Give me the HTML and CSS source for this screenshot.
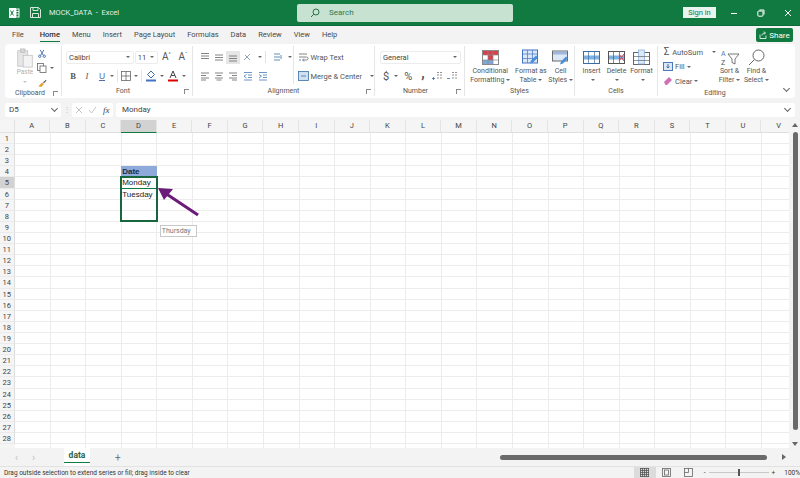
FILE: index.html
```html
<!DOCTYPE html>
<html lang="en">
<head>
  <meta charset="UTF-8" />
  <title>MOCK_DATA - Excel</title>
  <link rel="stylesheet" href="styles.css">
</head>
<body>

<!-- Title bar -->
<div class="titlebar">
  <div class="title-left">
    <svg class="ic-logo" width="12" height="12" viewBox="0 0 12 12"><rect x="1" y="1" width="7" height="10" fill="#fff"/><rect x="5" y="2" width="6" height="8" fill="none" stroke="#fff"/><path d="M5 4.5h6M5 7h6M8 2v8" stroke="#fff" stroke-width=".8"/><path d="M2.5 3.5l3 5M5.5 3.5l-3 5" stroke="#107c41" stroke-width="1"/></svg>
    <svg class="ic-save" width="11" height="11" viewBox="0 0 11 11" fill="none" stroke="#d5e8dc"><path d="M.5.5h8l2 2v8H.5z"/><path d="M3 .5v3h5v-3M2.5 10.5v-4h6v4"/></svg>
    <span class="doc-title">MOCK_DATA &nbsp;-&nbsp; Excel</span>
  </div>
  <div class="search">
    <svg width="10" height="10" viewBox="0 0 10 10" fill="none" stroke="#2c6e49"><circle cx="6" cy="4" r="3"/><path d="M3.8 6.2L1 9"/></svg>
    <span>Search</span>
  </div>
  <div class="title-right">
    <span class="signin">Sign in</span>
    <div class="winbtns">
      <svg width="8" height="8" viewBox="0 0 8 8" stroke="#fff" fill="none"><path d="M1 4.5h6"/></svg>
      <svg width="8" height="8" viewBox="0 0 8 8" stroke="#fff" fill="none"><rect x=".8" y="2" width="5.2" height="5.2" rx="1"/><path d="M2.5 1h4.5v4.5"/></svg>
      <svg width="8" height="8" viewBox="0 0 8 8" stroke="#fff" fill="none"><path d="M1 1l6 6M7 1l-6 6"/></svg>
    </div>
  </div>
</div>

<!-- Tabs -->
<div class="tabs">
  <a>File</a>
  <a class="active">Home</a>
  <a>Menu</a>
  <a>Insert</a>
  <a>Page Layout</a>
  <a>Formulas</a>
  <a>Data</a>
  <a>Review</a>
  <a>View</a>
  <a>Help</a>
  <span class="share">
    <svg width="8" height="8" viewBox="0 0 8 8" fill="none" stroke="#fff" stroke-width=".8"><path d="M1 3.5v4h6v-3M3 4.5c0-2 1.500-2.500 3-2.500M5 .5L6.500 2 5 3.500"/></svg>
    Share
  </span>
</div>

<!-- Ribbon -->
<div class="ribbon">

  <div class="group g-clip">
    <div class="group-body clip-body">
      <div class="paste">
        <svg width="18" height="20" viewBox="0 0 18 22" fill="#e6e6e6" stroke="#bdbdbd" stroke-width=".8"><rect x="1" y="3" width="11" height="17"/><rect x="4" y="1" width="5" height="4" fill="#d5d5d5"/><rect x="7" y="8" width="10" height="13" fill="#f3f3f3"/></svg>
        <span>Paste</span>
        <i class="caret light"></i>
      </div>
      <div class="clip-tools">
        <svg width="10" height="10" viewBox="0 0 10 10" fill="none" stroke="#3c6ea5"><path d="M3 1l3.500 6M7 1L3.500 7"/><circle cx="2.500" cy="8" r="1.300"/><circle cx="7.500" cy="8" r="1.300"/></svg>
        <span class="row-ic">
          <svg width="10" height="10" viewBox="0 0 10 10" fill="#fff" stroke="#666" stroke-width=".8"><rect x=".5" y=".5" width="6" height="7"/><rect x="3" y="3" width="6" height="6.500"/></svg>
          <i class="caret"></i>
        </span>
        <svg width="11" height="11" viewBox="0 0 11 11"><path d="M1 9l4-4 2 2-3 3z" fill="#e0a030"/><path d="M6 5l3-3 1 1-3 3z" fill="#6a6a6a"/></svg>
      </div>
    </div>
    <div class="group-label">Clipboard<i class="launcher"></i></div>
  </div>

  <div class="group g-font">
    <div class="group-body stack">
      <div class="row">
        <span class="select font-name">Calibri<i class="caret"></i></span>
        <span class="select font-size">11<i class="caret"></i></span>
        <span class="grow-a">A<sup>^</sup></span>
        <span class="shrink-a">A<sup>ˇ</sup></span>
      </div>
      <div class="row font-tools">
        <b class="tool">B</b>
        <em class="tool">I</em>
        <u class="tool">U</u>
        <i class="caret"></i>
        <span class="vsep"></span>
        <svg width="10" height="10" viewBox="0 0 10 10" fill="none" stroke="#666" stroke-width=".8"><rect x=".5" y=".5" width="9" height="9"/><path d="M5 .5v9M.5 5h9"/></svg>
        <i class="caret"></i>
        <span class="vsep"></span>
        <svg width="12" height="12" viewBox="0 0 12 12"><path d="M6 1l3.500 3.500L6 8 2.500 4.500z" fill="none" stroke="#3c6ea5"/><rect x="1" y="9.500" width="10" height="2" fill="#4472c4"/></svg>
        <i class="caret"></i>
        <svg class="font-color" width="12" height="12" viewBox="0 0 12 12"><path d="M3 8l3-7 3 7M4.200 5.500h3.600" fill="none" stroke="#444"/><rect x="1" y="9.500" width="10" height="2" fill="#d00"/></svg>
        <i class="caret"></i>
      </div>
    </div>
    <div class="group-label">Font<i class="launcher"></i></div>
  </div>

  <div class="group g-align">
    <div class="group-body align-body">
      <div class="stack align-icons">
        <div class="row">
          <svg class="lines" viewBox="0 0 10 10"><path d="M1 1.500h8M1 4h8M1 6.500h8"/></svg>
          <svg class="lines" viewBox="0 0 10 10"><path d="M1 3h8M1 5.500h8M1 8h8"/></svg>
          <span class="lines-on"><svg class="lines" viewBox="0 0 10 10"><path d="M1 4h8M1 6.500h8M1 9h8"/></svg></span>
          <svg class="lines orient" viewBox="0 0 10 10"><path d="M1 8l6-6M2 3l5 5" stroke="#7a8fb0"/></svg>
          <i class="caret"></i>
          <span class="vsep"></span>
          <svg class="lines rtl" viewBox="0 0 10 10"><path d="M1 2h6M1 5h6M1 8h6M8 3v4" stroke="#3c6ea5"/></svg>
          <i class="caret"></i>
        </div>
        <div class="row">
          <svg class="lines" viewBox="0 0 10 10"><path d="M1 2h8M1 4.500h5M1 7h8M1 9h5"/></svg>
          <svg class="lines" viewBox="0 0 10 10"><path d="M1 2h8M2.500 4.500h5M1 7h8M2.500 9h5"/></svg>
          <svg class="lines" viewBox="0 0 10 10"><path d="M1 2h8M4 4.500h5M1 7h8M4 9h5"/></svg>
          <svg class="lines indent" viewBox="0 0 10 10"><path d="M1 1.500h8M5 4h4M5 6.500h4M1 9h8M3.500 3.500L1 5.200l2.500 1.800" stroke="#4a7ab5"/></svg>
          <svg class="lines indent" viewBox="0 0 10 10"><path d="M1 1.500h8M5 4h4M5 6.500h4M1 9h8M1 3.500l2.500 1.700L1 7" stroke="#4a7ab5"/></svg>
        </div>
      </div>
      <div class="stack wrap-col">
        <div class="row">
          <svg width="11" height="11" viewBox="0 0 11 11" fill="none" stroke="#666" stroke-width=".8"><path d="M1 2h8M1 5h7.500a1.500 1.500 0 010 3H5M1 8h2"/><path d="M6 6.500L4.500 8 6 9.500" stroke="#3c6ea5"/></svg>
          <span>Wrap Text</span>
        </div>
        <div class="row">
          <svg width="11" height="10" viewBox="0 0 11 10" fill="#cfe0f3" stroke="#3c6ea5" stroke-width=".8"><rect x=".5" y=".5" width="10" height="9"/><path d="M3 5h5" /></svg>
          <span>Merge &amp; Center</span>
          <i class="caret merge-caret"></i>
        </div>
      </div>
    </div>
    <div class="group-label">Alignment<i class="launcher"></i></div>
  </div>

  <div class="group g-number">
    <div class="group-body stack">
      <div class="row"><span class="select num-format">General<i class="caret"></i></span></div>
      <div class="row num-tools">
        <span class="dollar">$</span>
        <i class="caret"></i>
        <span class="pct">%</span>
        <span class="comma">,</span>
        <svg width="11" height="10" viewBox="0 0 11 10" fill="none" stroke="#777" stroke-width=".8"><path d="M5 1.500h5M5 4h5M5 7h5" stroke-dasharray="2 1"/><path d="M3 7.500H0M1.500 6v3" stroke="#3c6ea5"/></svg>
        <svg width="11" height="10" viewBox="0 0 11 10" fill="none" stroke="#777" stroke-width=".8"><path d="M5 1.500h5M5 4h5M5 7h5" stroke-dasharray="2 1"/><path d="M3 7.500H0" stroke="#3c6ea5"/></svg>
      </div>
    </div>
    <div class="group-label">Number<i class="launcher"></i></div>
  </div>

  <div class="group g-styles">
    <div class="group-body big-row">
      <div class="big w-cond">
        <svg width="17" height="15" viewBox="0 0 17 15"><rect x=".5" y=".5" width="16" height="14" fill="#fff" stroke="#8a8a8a"/><rect x="1" y="1" width="15" height="4" fill="#d8404a"/><rect x="6" y="5" width="5" height="5" fill="#d8404a"/><rect x="1" y="10" width="10" height="4" fill="#7fa8d8"/><path d="M.5 5h16M.5 10h16M6 .5v14M11 .5v14" stroke="#8a8a8a" stroke-width=".7"/></svg>
        <span>Conditional<br>Formatting<i class="caret"></i></span>
      </div>
      <div class="big w-table">
        <svg width="17" height="16" viewBox="0 0 17 16"><rect x=".5" y=".5" width="15" height="13" fill="#dce8f6" stroke="#4472c4"/><path d="M.5 4.500h15M.5 9h15M5.500.5v13M10.500.5v13" stroke="#4472c4" stroke-width=".7"/><path d="M8 14l1-3 5-5 2 2-5 5z" fill="#4a90d9"/></svg>
        <span>Format as<br>Table<i class="caret"></i></span>
      </div>
      <div class="big w-cell">
        <svg width="17" height="16" viewBox="0 0 17 16"><rect x=".5" y="1.500" width="15" height="10" fill="#dce8f6" stroke="#6a6a6a"/><rect x="1" y="2" width="14" height="3" fill="#9fb7d8"/><path d="M8 15l1-3 5-5 2 2-5 5z" fill="#4a90d9"/></svg>
        <span>Cell<br>Styles<i class="caret"></i></span>
      </div>
    </div>
    <div class="group-label">Styles</div>
  </div>

  <div class="group g-cells">
    <div class="group-body big-row">
      <div class="big w-ins">
        <svg width="17" height="13" viewBox="0 0 17 13"><rect x=".5" y=".5" width="16" height="12" fill="#fff" stroke="#3c6ea5"/><rect x="1" y="4.500" width="15" height="4" fill="#7fb0e0"/><path d="M5.500.5v12M11.500.5v12" stroke="#3c6ea5" stroke-width=".7"/></svg>
        <span>Insert<br><i class="caret"></i></span>
      </div>
      <div class="big w-ins">
        <svg width="17" height="13" viewBox="0 0 17 13"><rect x=".5" y=".5" width="16" height="12" fill="#fff" stroke="#555"/><rect x="1" y="4.500" width="15" height="4" fill="#7fb0e0"/><path d="M5.500.5v12M11.500.5v12" stroke="#555" stroke-width=".7"/><path d="M11 3l5 7M16 3l-5 7" stroke="#d8404a"/></svg>
        <span>Delete<br><i class="caret"></i></span>
      </div>
      <div class="big w-ins">
        <svg width="17" height="15" viewBox="0 0 17 15"><rect x=".5" y="2.500" width="16" height="12" fill="#fff" stroke="#666"/><rect x="5.500" y="0" width="6" height="14" fill="#dce8f6" stroke="#7fa8d8" stroke-width=".7"/><path d="M.5 6.500h16M.5 10.500h16" stroke="#666" stroke-width=".7"/></svg>
        <span>Format<br><i class="caret"></i></span>
      </div>
    </div>
    <div class="group-label">Cells</div>
  </div>

  <div class="group g-edit">
    <div class="group-body edit-body">
      <div class="edit-list">
        <div class="row"><span class="sigma">Σ</span><span>AutoSum</span><i class="caret sum-caret"></i></div>
        <div class="row">
          <svg width="10" height="9" viewBox="0 0 10 9"><rect x=".5" y=".5" width="9" height="8" fill="#dce8f6" stroke="#4a7ab5"/><path d="M5 2v4M3.500 4.500L5 6l1.500-1.500" stroke="#3c6ea5" fill="none"/></svg>
          <span>Fill</span><i class="caret"></i>
        </div>
        <div class="row">
          <svg width="10" height="10" viewBox="0 0 10 10"><path d="M1 6l5-5 3 3-5 5H2.500z" fill="#d070b8"/></svg>
          <span>Clear</span><i class="caret"></i>
        </div>
      </div>
      <div class="big w-sort">
        <svg width="20" height="17" viewBox="0 0 20 17" fill="none"><path d="M8 5h11l-4 5v5l-3-1.500V10z" stroke="#555" stroke-width=".8"/><text x="1" y="7" class="az az-a">A</text><text x="1" y="15.500" class="az">Z</text></svg>
        <span>Sort &amp;<br>Filter<i class="caret"></i></span>
      </div>
      <div class="big w-sort">
        <svg width="17" height="17" viewBox="0 0 17 17" fill="none" stroke="#666"><circle cx="10.500" cy="6.500" r="5.500"/><path d="M6.500 10.500L1 16"/></svg>
        <span>Find &amp;<br>Select<i class="caret"></i></span>
      </div>
    </div>
    <div class="group-label">Editing</div>
  </div>

  <i class="chev collapse"></i>
</div>

<!-- Formula bar -->
<div class="formula">
  <div class="namebox">D5<i class="chev"></i></div>
  <span class="dots">⋮</span>
  <div class="fx-box">
    <svg width="8" height="8" viewBox="0 0 8 8" stroke="#c4c4c4" fill="none"><path d="M1 1l6 6M7 1L1 7"/></svg>
    <svg width="9" height="8" viewBox="0 0 9 8" stroke="#c4c4c4" fill="none"><path d="M1 4l2.500 3L8 1"/></svg>
    <em>fx</em>
  </div>
  <div class="input">Monday<i class="chev"></i></div>
</div>

<!-- Sheet -->
<div class="sheet">
  <div class="corner"></div>
  <div class="cols">
    <span>A</span><span>B</span><span>C</span><span class="on">D</span><span>E</span><span>F</span><span>G</span><span>H</span><span>I</span><span>J</span><span>K</span><span>L</span><span>M</span><span>N</span><span>O</span><span>P</span><span>Q</span><span>R</span><span>S</span><span>T</span><span>U</span><span>V</span>
  </div>
  <div class="rows">
    <span>1</span><span>2</span><span>3</span><span>4</span><span class="on">5</span><span>6</span><span>7</span><span>8</span><span>9</span><span>10</span><span>11</span><span>12</span><span>13</span><span>14</span><span>15</span><span>16</span><span>17</span><span>18</span><span>19</span><span>20</span><span>21</span><span>22</span><span>23</span><span>24</span><span>25</span><span>26</span><span>27</span><span>28</span>
  </div>
  <div class="cells">
    <div class="cell head">Date</div>
    <div class="cell mon">Monday</div>
    <div class="cell tue">Tuesday</div>
    <div class="selection"></div>
    <div class="hint">Thursday</div>
    <svg class="arrow" width="46" height="34" viewBox="0 0 46 34"><path d="M41 28L8 6" stroke="#6a1b7a" stroke-width="3" fill="none"/><path d="M1 1l15 1-9 11z" fill="#6a1b7a"/></svg>
  </div>
  <div class="vscroll">
    <i class="arrow-up"></i>
    <div class="vthumb"></div>
    <i class="arrow-down"></i>
  </div>
</div>

<!-- Sheet tabs -->
<div class="sheetbar">
  <span class="nav-arrows"><i>‹</i><i>›</i></span>
  <span class="sheet-tab">data</span>
  <span class="plus">+</span>
  <div class="hscroll">
    <div class="hthumb"></div>
    <i class="arrow-right"></i>
  </div>
</div>

<!-- Status bar -->
<div class="status">
  <span class="status-msg">Drag outside selection to extend series or fill; drag inside to clear</span>
  <div class="views">
    <span class="view on"><svg width="9" height="9" viewBox="0 0 9 9" fill="none" stroke="#555" stroke-width=".8"><path d="M.5 0v9M2.500 0v9M4.500 0v9M6.500 0v9M8.500 0v9M0 .5h9M0 2.500h9M0 4.500h9M0 6.500h9M0 8.500h9"/></svg></span>
    <span class="view"><svg width="9" height="9" viewBox="0 0 9 9" fill="none" stroke="#666" stroke-width=".8"><rect x=".5" y=".5" width="8" height="8"/><rect x="2.500" y="2" width="4" height="5"/></svg></span>
    <span class="view"><svg width="9" height="9" viewBox="0 0 9 9" fill="none" stroke="#666" stroke-width=".8"><rect x=".5" y=".5" width="8" height="8"/><path d="M4.500.5v4h-4"/></svg></span>
  </div>
  <div class="zoom">
    <span>-</span>
    <div class="slider"><i></i></div>
    <span>+</span>
    <span class="pct-zoom">100%</span>
  </div>
</div>

</body>
</html>
```

FILE: styles.css
```css
* {
  box-sizing: border-box;
}
body {
  margin: 0;
  width: 800px;
  height: 478px;
  overflow: hidden;
  background: #f3f3f3;
  font-family: Roboto, "Open Sans", sans-serif;
  font-size: 7px;
  color: #444;
}
i {
  font-style: normal;
}

/* title bar */
.titlebar {
  height: 26px;
  background: #107a41;
  display: flex;
  align-items: center;
  color: #fff;
  border-bottom: 1px solid #0c6b38;
}
.title-left {
  width: 297px;
  display: flex;
  align-items: center;
  padding-left: 8px;
}
.ic-save {
  margin-left: 10px;
}
.doc-title {
  margin-left: 8px;
  font-size: 7.500px;
  color: #e4f1e9;
}
.search {
  width: 216px;
  height: 18px;
  background: #c8e2d2;
  border-radius: 2px;
  display: flex;
  align-items: center;
  gap: 9px;
  padding-left: 13px;
  color: #2c7a50;
  font-size: 8px;
}
.title-right {
  flex: 1;
  display: flex;
  align-items: center;
  padding-left: 170px;
}
.signin {
  width: 33px;
  height: 11px;
  background: #eaf4ee;
  color: #107a41;
  font-size: 7.500px;
  line-height: 11px;
  text-align: center;
}
.winbtns {
  display: flex;
  gap: 19px;
  margin-left: 14px;
}

/* tabs */
.tabs {
  height: 18px;
  display: flex;
  align-items: center;
  padding-left: 12px;
  font-size: 7.500px;
  position: relative;
  color: #4a4a4a;
}
.tabs a {
  margin-right: 12px;
  line-height: 18px;
  white-space: nowrap;
}
.tabs a.active {
  margin-left: 4px;
  color: #2f2f2f;
  font-weight: 500;
  box-shadow: inset 0 -2px 0 #f3f3f3, inset 0 -3px 0 #107a41;
}
.share {
  position: absolute;
  left: 756px;
  top: 2px;
  width: 37px;
  height: 14px;
  background: #107a41;
  border-radius: 2px;
  color: #fff;
  display: flex;
  align-items: center;
  justify-content: center;
  gap: 2px;
  font-size: 8px;
}

/* ribbon */
.ribbon {
  height: 54px;
  margin: 0 5px;
  background: #fff;
  border-radius: 4px;
  display: flex;
  position: relative;
}
.group {
  border-right: 1px solid #e6e6e6;
  margin: 2px 0;
  display: flex;
  flex-direction: column;
  flex: none;
}
.group-body {
  height: 42px;
}
.group-label {
  height: 10px;
  line-height: 10px;
  text-align: center;
  font-size: 7px;
  position: relative;
  color: #555;
}
.launcher {
  position: absolute;
  right: 3px;
  top: 3px;
  width: 5px;
  height: 5px;
  border-left: 1px solid #888;
  border-top: 1px solid #888;
}
.g-clip { width: 57px; }
.g-font { width: 131px; }
.g-align { width: 182px; }
.g-number { width: 90px; }
.g-styles { width: 110px; }
.g-cells { width: 83px; }
.g-edit { width: 114px; border-right: none; }
.g-clip .group-label { padding-right: 6px; }
.g-font .group-label, .g-number .group-label { padding-right: 8px; }

.caret {
  display: inline-block;
  width: 0;
  height: 0;
  margin-left: 3px;
  vertical-align: middle;
  border-left: 2px solid transparent;
  border-right: 2px solid transparent;
  border-top: 2px solid #666;
}
.caret.light {
  border-top-color: #c4c4c4;
  margin: 5px 0 0;
}
.chev {
  display: inline-block;
  width: 5px;
  height: 5px;
  border-right: 1px solid #666;
  border-bottom: 1px solid #666;
  transform: rotate(45deg);
}
.stack {
  display: flex;
  flex-direction: column;
  gap: 5px;
  padding-top: 4px;
}
.row {
  display: flex;
  align-items: center;
  height: 14px;
}
.vsep {
  width: 1px;
  height: 12px;
  background: #e2e2e2;
  margin: 0 3px;
}

/* clipboard */
.clip-body {
  display: flex;
  padding: 2px 0 0 11px;
  gap: 3px;
}
.paste {
  width: 18px;
  display: flex;
  flex-direction: column;
  align-items: center;
  font-size: 6.500px;
  color: #b0b0b0;
  flex: none;
}
.clip-tools {
  display: flex;
  flex-direction: column;
  gap: 5px;
  align-items: flex-start;
  padding-top: 1px;
}
.row-ic {
  display: flex;
  align-items: center;
}

/* font */
.g-font .group-body {
  padding-left: 4px;
}
.select {
  height: 13px;
  line-height: 13px;
  background: #fff;
  border: 1px solid #ececec;
  border-radius: 2px;
  font-size: 7.500px;
  padding-left: 2px;
  display: flex;
  align-items: center;
  justify-content: space-between;
  padding-right: 3px;
}
.font-name { width: 70px; }
.font-size { width: 24px; margin-left: 1px; }
.grow-a, .shrink-a {
  font-size: 10px;
  line-height: 10px;
  margin-left: 3px;
  width: 14px;
  color: #555;
}
.grow-a { margin-left: 4px; }
.grow-a sup, .shrink-a sup {
  font-size: 5px;
  line-height: 0;
}
.font-tools {
  color: #555;
}
.tool {
  width: 14px;
  text-align: center;
  font-size: 8.500px;
  font-family: "Liberation Serif", serif;
}
u.tool { font-family: "Liberation Sans", sans-serif; color: #5570a0; width: 10px; margin-left: 3px; }
.font-color { margin-left: 3px; }
.font-tools svg { flex: none; }

/* alignment */
.align-body {
  display: flex;
}
.align-icons {
  width: 101px;
  padding-left: 5px;
}
.align-icons .row {
  gap: 0;
}
.lines {
  width: 10px;
  height: 10px;
  margin: 0 2px;
  fill: none;
  stroke: #666;
  stroke-width: .8;
  flex: none;
}
.lines-on {
  width: 14px;
  height: 13px;
  background: #e6e6e6;
  display: flex;
  align-items: center;
  justify-content: center;
}
.orient { margin-left: 3px; }
.rtl { margin-left: 4px; }
.indent { margin: 0 2px 0 3px; }
.wrap-col {
  border-left: 1px solid #e6e6e6;
  padding-left: 4px;
  flex: 1;
  font-size: 7.500px;
  color: #555;
  height: 38px;
}
.wrap-col .row {
  gap: 1px;
  white-space: nowrap;
}
.merge-caret {
  margin-left: 7px;
}

/* number */
.g-number .group-body {
  padding-left: 5px;
}
.num-format {
  width: 81px;
}
.num-tools {
  color: #555;
}
.dollar {
  font-size: 11px;
  margin-left: 3px;
}
.num-tools .caret {
  margin-left: 5px;
}
.pct {
  font-size: 11px;
  margin-left: 6px;
}
.comma {
  font-size: 14px;
  font-weight: 700;
  line-height: 8px;
  margin-left: 9px;
  width: 6px;
  transform: translateY(-3px);
}
.num-tools svg {
  margin-left: 5px;
}
.num-tools svg + svg {
  margin-left: 4px;
}

/* big buttons */
.big-row {
  display: flex;
  padding-top: 3px;
}
.big {
  display: flex;
  flex-direction: column;
  align-items: center;
  text-align: center;
  font-size: 7px;
  line-height: 9px;
  gap: 1px;
  color: #555;
}
.big svg {
  height: 17px;
  flex: none;
}
.big .caret {
  margin-left: 2px;
}
.w-cond { width: 49px; margin-left: 1px; }
.w-table { width: 33px; }
.w-cell { width: 27px; }
.w-ins { width: 25px; }
.g-cells .big-row { padding-left: 4px; }

/* editing */
.edit-body {
  display: flex;
  padding-left: 5px;
}
.edit-list {
  width: 53px;
  font-size: 7.500px;
  color: #555;
  margin-top: -1px;
}
.edit-list .row {
  height: 14.500px;
  gap: 2px;
}
.edit-list .caret {
  margin-left: 0;
}
.sigma {
  font-size: 10px;
  width: 10px;
  line-height: 10px;
  text-align: center;
}
.edit-list .sum-caret {
  margin-left: 7px;
}
.g-edit .big {
  padding-top: 3px;
}
.w-sort { width: 27px; }
.az {
  font-size: 7px;
  fill: #555;
  stroke: none;
}
.az-a { fill: #4a7ab5; }
.collapse {
  position: absolute;
  right: 6px;
  bottom: 7px;
}

/* formula bar */
.formula {
  height: 22px;
  display: flex;
  align-items: center;
  padding: 1px 5px 0;
  font-size: 8px;
}
.namebox {
  width: 56px;
  height: 14px;
  background: #fff;
  border-radius: 2px;
  display: flex;
  align-items: center;
  justify-content: space-between;
  padding: 0 4px;
}
.namebox .chev, .input .chev {
  margin-top: -2px;
}
.dots {
  width: 11px;
  text-align: center;
  color: #c4c4c4;
}
.fx-box {
  width: 41px;
  height: 14px;
  background: #fff;
  display: flex;
  align-items: center;
  gap: 5px;
  padding-left: 3px;
  border-radius: 2px;
}
.fx-box em {
  font-family: "Liberation Serif", serif;
  font-size: 9px;
  margin-left: 1px;
}
.input {
  flex: 1;
  margin-left: 3px;
  height: 14px;
  background: #fff;
  border-radius: 2px;
  display: flex;
  align-items: center;
  justify-content: space-between;
  padding: 0 5px 0 6px;
}

/* sheet */
.sheet {
  height: 328px;
  background: #fff;
  display: grid;
  grid-template-columns: 14.500px 1fr 11px;
  grid-template-rows: 13px 1fr;
  position: relative;
  overflow: hidden;
}
.corner {
  background: #f5f5f5;
  border-right: 1px solid #e2e2e2;
  border-bottom: 1px solid #e2e2e2;
}
.cols {
  display: grid;
  grid-template-columns: repeat(22, 35.570px);
  background: #f5f5f5;
  overflow: hidden;
  grid-column: 2;
  text-align: center;
  line-height: 12px;
  font-size: 7.500px;
}
.cols span {
  border-right: 1px solid #e4e4e4;
  border-bottom: 1px solid #dedede;
}
.cols span.on {
  background: #d2d2d2;
  border-bottom: 1px solid #107a41;
}
.rows {
  grid-row: 2;
  display: grid;
  grid-auto-rows: 11.110px;
  background: #f5f5f5;
  text-align: center;
  font-size: 7.500px;
  line-height: 11px;
  overflow: hidden;
}
.rows span {
  border-right: 1px solid #dedede;
  border-bottom: 1px solid #ebebeb;
}
.rows span.on {
  background: #d2d2d2;
}
.cells {
  grid-column: 2;
  grid-row: 2;
  display: grid;
  grid-template-columns: repeat(22, 35.570px);
  grid-auto-rows: 11.110px;
  position: relative;
  background-image:
    repeating-linear-gradient(to right, transparent 0 34.570px, #ececec 34.570px 35.570px),
    repeating-linear-gradient(to bottom, transparent 0 10.110px, #ececec 10.110px 11.110px);
  overflow: hidden;
  font-family: "Liberation Sans", Arial, sans-serif;
  color: #222;
  font-size: 8px;
  line-height: 11px;
}
.cell {
  grid-column: 4;
  padding-left: 1px;
}
.head {
  grid-row: 4;
  background: #8eaadb;
  font-weight: bold;
  color: #1a2a44;
}
.mon {
  grid-row: 5;
  border-bottom: 1px solid #107a41;
}
.tue {
  grid-row: 6;
}
.selection {
  grid-column: 4;
  grid-row: 5 / 9;
  border: 2px solid #17663e;
  margin: -1px -1px 0 -1px;
}
.hint {
  grid-column: 5;
  grid-row: 9;
  margin: 3px 0 -3px 3px;
  width: 37px;
  height: 12px;
  background: #fff;
  border: 1px solid #c8c8c8;
  color: #777;
  font-family: Roboto, sans-serif;
  font-size: 7px;
  padding-left: 1px;
  line-height: 10px;
}
.arrow {
  position: absolute;
  left: 142px;
  top: 54px;
}
.vscroll {
  grid-column: 3;
  grid-row: 1 / 3;
  background: #f3f3f3;
  position: relative;
  display: flex;
  flex-direction: column;
  align-items: center;
  padding-left: 1px;
}
.vthumb {
  width: 5px;
  height: 298px;
  background: #6a6a6a;
  border-radius: 3px;
  margin-top: 5px;
}
.arrow-up, .arrow-down, .arrow-right {
  display: block;
  width: 0;
  height: 0;
}
.arrow-up {
  margin-top: 3px;
  border-left: 3px solid transparent;
  border-right: 3px solid transparent;
  border-bottom: 4px solid #666;
}
.arrow-down {
  margin-top: 12px;
  border-left: 3px solid transparent;
  border-right: 3px solid transparent;
  border-top: 4px solid #666;
}

/* sheet tabs */
.sheetbar {
  height: 18px;
  display: flex;
  align-items: center;
  background: #f3f3f3;
}
.nav-arrows {
  width: 64px;
  display: flex;
  gap: 14px;
  padding-left: 15px;
  font-size: 10px;
  color: #c0c0c0;
}
.sheet-tab {
  width: 26px;
  height: 18px;
  background: #fff;
  text-align: center;
  font-size: 8.500px;
  font-weight: 700;
  line-height: 15px;
  color: #2f5f47;
  box-shadow: inset 0 -3px 0 #fff, inset 0 -4px 0 #107a41;
}
.plus {
  margin-left: 25px;
  font-size: 10px;
  color: #777;
  width: 385px;
}
.hscroll {
  flex: 1;
  display: flex;
  align-items: center;
}
.hthumb {
  width: 267px;
  height: 5px;
  background: #6a6a6a;
  border-radius: 3px;
}
.arrow-right {
  margin-left: 15px;
  border-top: 3px solid transparent;
  border-bottom: 3px solid transparent;
  border-left: 4px solid #666;
}

/* status bar */
.status {
  height: 12px;
  display: flex;
  align-items: center;
  padding-left: 4px;
  font-size: 6.500px;
  color: #333;
  background: #f3f3f3;
  border-top: 1px solid #e2e2e2;
}
.status-msg {
  width: 630px;
}
.views {
  display: flex;
}
.view {
  width: 22px;
  height: 12px;
  display: flex;
  align-items: center;
  justify-content: center;
}
.view.on {
  background: #dcdcdc;
}
.zoom {
  display: flex;
  align-items: center;
  margin-left: 4px;
  gap: 3px;
}
.slider {
  width: 60px;
  height: 1px;
  background: #c8c8c8;
  position: relative;
}
.slider i {
  position: absolute;
  left: 29px;
  top: -3px;
  width: 2px;
  height: 7px;
  background: #555;
}
.pct-zoom {
  margin-left: 6px;
}
```
